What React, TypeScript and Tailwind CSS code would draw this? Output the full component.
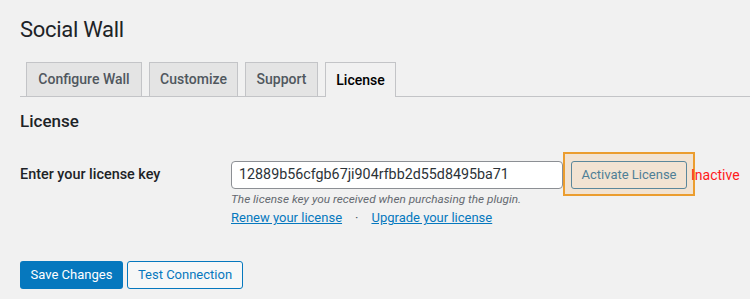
import React from "react";

const font = { fontFamily: "Roboto, 'Liberation Sans', sans-serif" };

function Tab({ label, active, w }: { label: string; active?: boolean; w: string }) {
  if (active) {
    return (
      <div className={`-mb-px h-[35px] border border-b-0 border-[#c3c4c7] bg-[#f1f1f1] flex items-center justify-center text-[14px] font-medium text-black ${w}`}>
        {label}
      </div>
    );
  }
  return (
    <div className={`h-[34px] border border-b-0 border-[#c3c4c7] bg-[#e4e4e4] flex items-center justify-center text-[14px] font-medium text-[#50575e] ${w}`}>
      {label}
    </div>
  );
}

export default function App() {
  return (
    <div
      className="w-[750px] h-[299px] overflow-hidden bg-[#f1f1f1] pt-[16px] pl-[20px] text-[#1d2327]"
      style={font}
    >
      <h1 className="text-[22px] leading-[28px] font-normal tracking-[-0.3px]">Social Wall</h1>

      <div className="mt-[18px] flex items-end gap-[7px] border-b border-[#c3c4c7] pl-[6px]">
        <Tab label="Configure Wall" w="w-[116px]" />
        <Tab label="Customize" w="w-[89px]" />
        <Tab label="Support" w="w-[73px]" />
        <Tab label="License" w="w-[71px]" active />
      </div>

      <h2 className="mt-[12px] text-[17px] leading-[24px] font-medium">License</h2>

      <div className="mt-[28px] flex">
        <div className="w-[211px] h-[28px] flex items-center text-[14.4px] font-medium">
          Enter your license key
        </div>
        <div className="flex flex-col">
          <div className="flex items-center">
            <div className="w-[332px] h-[28px] rounded-[4px] border border-[#8c8f94] bg-white pl-[7px] flex items-center text-[14.3px] text-[#2c3338]">
              12889b56cfgb67ji904rfbb2d55d8495ba71
            </div>
            <div className="relative ml-[8px]">
              <div className="absolute -left-[8px] -right-[8px] -top-[9px] -bottom-[7px] border-2 border-[#eb9d2f] bg-[#f2e3d2]" />
              <div className="relative w-[116px] h-[28px] rounded-[3px] border border-[#5b879b] bg-[#f2e3d2] flex items-center justify-center text-[13px] text-[#4f7f96]">
                Activate License
              </div>
            </div>
            <span className="relative ml-[4px] text-[14px] text-[#ff1a1a]">Inactive</span>
          </div>
          <p className="mt-[1px] text-[11.8px] leading-[18px] italic text-[#646970]">
            The license key you received when purchasing the plugin.
          </p>
          <div className="flex items-center text-[13px] leading-[20px] text-[#0678be]">
            <a className="underline">Renew your license</a>
            <span className="mx-[13px] text-[#50575e]">·</span>
            <a className="underline">Upgrade your license</a>
          </div>
        </div>
      </div>

      <div className="mt-[33px] flex gap-[4px]">
        <div className="w-[103px] h-[28px] rounded-[3px] bg-[#0678be] flex items-center justify-center text-[13px] text-white">
          Save Changes
        </div>
        <div className="w-[116px] h-[28px] rounded-[3px] border border-[#0678be] bg-[#f6f7f7] flex items-center justify-center text-[13px] text-[#0678be]">
          Test Connection
        </div>
      </div>
    </div>
  );
}
